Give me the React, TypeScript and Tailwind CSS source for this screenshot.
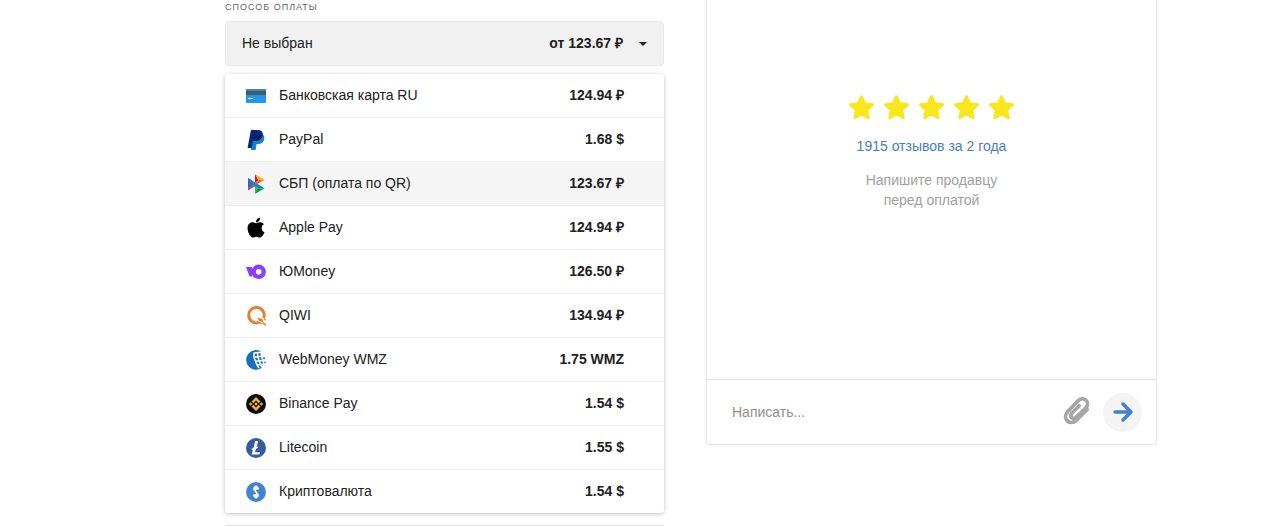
import { useState } from 'react';
import type { ReactNode } from 'react';
import { FaApple } from 'react-icons/fa';

interface PaymentMethod {
  id: string;
  name: string;
  price: string;
  icon: ReactNode;
}

const CardIcon = () => (
  <svg className="w-5 h-5" viewBox="0 0 20 20">
    <rect x="0" y="3" width="20" height="14" rx="1" fill="#2196f3" />
    <path d="M0 5V4a1 1 0 0 1 1-1h18a1 1 0 0 1 1 1v1z" fill="#3d88c4" />
    <rect x="0" y="5" width="20" height="4" fill="#455a64" />
    <rect x="2" y="12" width="5" height="1" fill="#fff" />
  </svg>
);

const PaypalIcon = () => (
  <svg className="w-5 h-5" viewBox="0 0 20 20">
    <path d="M6.500 4h9.200c2.400 1 3 2.800 2.500 5-.7 3.600-3 5-6.200 5h-1.400L9.600 20H5z" fill="#0a86ca" />
    <path d="M4.900 0h7c3.500 0 5.300 1.800 4.700 5-.7 3.800-3.200 5.700-7 5.700H7L5.700 18H1.600z" fill="#00297a" />
    <path d="M8 5h7.800c.6 0 .8.400.7 1-.8 3.200-3.200 4.700-6.900 4.700H7z" fill="#001c64" />
  </svg>
);

const SbpIcon = () => (
  <svg className="w-5 h-5" viewBox="0 0 20 20">
    <path d="M2 4l4 2.500 1 4L2 16.500z" fill="#5b57a2" />
    <path d="M2 16.500l7.500-4.500-3.500-2z" fill="#8b5aa8" />
    <path d="M9 0v8.500l3.500-2z" fill="#d90751" />
    <path d="M9 0l9.500 5.700h-5L12.500 6.500z" fill="#fab718" />
    <path d="M18.500 5.700L11 10.200 9 8.500l4.500-2.800z" fill="#ed6f26" />
    <path d="M9 12v8l3.500-5.500z" fill="#63b22f" />
    <path d="M9 20l9.500-5.700H12z" fill="#0c9a4a" />
    <path d="M2 4l16.500 10.300h-6L9 12.500 4.500 9.500z" fill="#1487c9" />
  </svg>
);

const YooMoneyIcon = () => (
  <svg className="w-5 h-5" viewBox="0 0 20 20">
    <path d="M0 5h6v9.500H3.500z" fill="#8b3ffd" />
    <circle cx="12.700" cy="9.800" r="5" fill="none" stroke="#8b3ffd" strokeWidth="4.400" />
  </svg>
);

const QiwiIcon = () => (
  <svg className="w-5 h-5" viewBox="0 0 20 20">
    <path d="M12.500 16.600A7.700 7.700 0 1 1 17.600 12" fill="none" stroke="#e58231" strokeWidth="3" />
    <path d="M11.500 11.500l4.500 1.200 1.600 2.300-1.600 1-3-1z" fill="#e58231" />
    <path d="M12 16.200l3 1.300M17 17l2.700 2M18.500 13.200l.5.300" stroke="#e58231" strokeWidth="1.600" strokeLinecap="round" />
  </svg>
);

const WebMoneyIcon = () => (
  <svg className="w-5 h-5" viewBox="0 0 20 20">
    <path d="M15 1.500A9.800 9.800 0 1 0 15.500 18l2-5-2-10z" fill="#1472b8" />
    <g fill="none" stroke="#fff" strokeWidth="1.500">
      <path d="M8 3.200l3.500-.6 4-.4M8 7.200l3.800-.5 5-.5M9.500 11.200l3.500-.4 5-.4M11 15l3.500-.4 3.500-.3" />
      <path d="M8 2.500v4.700l1.500 4L11 15l2 3M11.500 2l.3 4.700 1.400 4.100 1.300 3.800 1.500 2.500M15 2l.6 4.300 1.400 4.200 1 4" />
    </g>
    <g fill="#1472b8">
      <circle cx="18" cy="8.300" r="1.100" />
      <circle cx="19" cy="12.300" r=".9" />
    </g>
  </svg>
);

const BinanceIcon = () => (
  <svg className="w-5 h-5" viewBox="0 0 20 20">
    <circle cx="10" cy="10" r="10" fill="#0b0b0e" />
    <g fill="#f0b232">
      <path d="M10 3l4.500 4.500-1.800 1.800L10 6.600 7.300 9.300 5.500 7.500z" />
      <path d="M10 17l4.500-4.500-1.800-1.800-2.700 2.700-2.700-2.700-1.800 1.800z" />
      <path d="M10 8.200l1.800 1.800-1.800 1.800L8.200 10zM4.600 8.200L6.400 10l-1.800 1.800L2.800 10zM15.400 8.200l1.800 1.800-1.800 1.800-1.800-1.800z" />
    </g>
  </svg>
);

const LitecoinIcon = () => (
  <svg className="w-5 h-5" viewBox="0 0 20 20">
    <circle cx="10" cy="10" r="10" fill="#345d9d" />
    <path d="M9.200 3h3l-1.700 6 1.700-.6-.5 1.700-1.700.6-1 3.500h5l-.6 2.300H5.600l1.300-4.700-1.400.5.500-1.700 1.400-.5z" fill="#fff" />
  </svg>
);

const CryptoIcon = () => (
  <svg className="w-5 h-5" viewBox="0 0 20 20">
    <circle cx="10" cy="10" r="10" fill="#4384d1" />
    <path d="M10 3l3.200 3.200L12 8l-1.200-.6L10 8.500l2.500 3.500.7 1.800L10 17l-3.200-3.200L8 12l1.200.6.8-1.100L7.500 8l-.7-1.800z" fill="#fff" />
  </svg>
);

const methods: PaymentMethod[] = [
  { id: 'card', name: 'Банковская карта RU', price: '124.94 ₽', icon: <CardIcon /> },
  { id: 'paypal', name: 'PayPal', price: '1.68 $', icon: <PaypalIcon /> },
  { id: 'sbp', name: 'СБП (оплата по QR)', price: '123.67 ₽', icon: <SbpIcon /> },
  { id: 'apple', name: 'Apple Pay', price: '124.94 ₽', icon: <FaApple className="w-6 h-[23px] shrink-0 text-black" /> },
  { id: 'yoomoney', name: 'ЮMoney', price: '126.50 ₽', icon: <YooMoneyIcon /> },
  { id: 'qiwi', name: 'QIWI', price: '134.94 ₽', icon: <QiwiIcon /> },
  { id: 'webmoney', name: 'WebMoney WMZ', price: '1.75 WMZ', icon: <WebMoneyIcon /> },
  { id: 'binance', name: 'Binance Pay', price: '1.54 $', icon: <BinanceIcon /> },
  { id: 'litecoin', name: 'Litecoin', price: '1.55 $', icon: <LitecoinIcon /> },
  { id: 'crypto', name: 'Криптовалюта', price: '1.54 $', icon: <CryptoIcon /> },
];

function PaymentSelect() {
  const [open, setOpen] = useState(true);
  const [active, setActive] = useState('sbp');
  const [selected, setSelected] = useState<PaymentMethod | null>(null);

  const handleSelect = (method: PaymentMethod) => {
    setSelected(method);
    setOpen(false);
  };

  return (
    <section className="border-b border-[#e0e0e0] pb-3">
      <h2 id="payment-label" className="pt-px text-[9px] leading-3 tracking-[1px] uppercase text-[#666]">
        Способ оплаты
      </h2>
      <button
        type="button"
        aria-haspopup="listbox"
        aria-expanded={open}
        aria-labelledby="payment-label"
        onClick={() => setOpen(!open)}
        className="mt-2 flex h-[45px] w-full items-center rounded border border-[#e8e8e8] bg-[#f1f1f1] px-4 pb-0.5"
      >
        <span>{selected ? selected.name : 'Не выбран'}</span>
        <span className="ml-auto font-bold">{selected ? selected.price : 'от 123.67 ₽'}</span>
        <svg className="mt-0.5 ml-4 w-2 h-1" viewBox="0 0 8 4">
          <path d="M0 0h8L4 4z" fill="#212121" />
        </svg>
      </button>

      {open && (
        <ul
          role="listbox"
          aria-labelledby="payment-label"
          className="mt-2 overflow-hidden rounded-sm bg-white shadow-[0_1px_4px_rgba(0,0,0,0.25)]"
        >
          {methods.map((method) => (
            <li
              key={method.id}
              role="option"
              aria-selected={method.id === active}
              onMouseEnter={() => setActive(method.id)}
              className="border-b border-[#eee] last:border-b-0"
            >
              <button
                type="button"
                onClick={() => handleSelect(method)}
                className={`flex h-[43px] w-full items-center pb-0.5 pl-[21px] pr-10 ${method.id === active ? 'bg-[#f5f5f5]' : 'bg-white'}`}
              >
                <span className="mt-0.5 flex w-5 justify-center">{method.icon}</span>
                <span className="ml-[13px]">{method.name}</span>
                <span className="ml-auto font-bold">{method.price}</span>
              </button>
            </li>
          ))}
        </ul>
      )}
    </section>
  );
}

function Chat() {
  const [message, setMessage] = useState('');

  return (
    <section className="flex flex-col self-start rounded-b border border-t-0 border-[#e5e5e5]">
      <div className="flex flex-col items-center pt-[94px] pb-[169px]">
        <div className="flex gap-2 pr-px" role="img" aria-label="5 из 5">
          {[1, 2, 3, 4, 5].map((star) => (
            <svg key={star} className="w-[27px] h-[27px]" viewBox="0 0 26 26">
              <path
                d="M13 2.200l3.300 7 7.600.9-5.600 5.300 1.400 7.700L13 19.400l-6.700 3.700 1.400-7.700L2.100 10.100l7.600-.9z"
                fill="#f9e71e"
                stroke="#f9e71e"
                strokeWidth="2.400"
                strokeLinejoin="round"
              />
            </svg>
          ))}
        </div>
        <a href="#reviews" className="mt-[15px] leading-5 text-[#4a7ebf]">
          1915 отзывов за 2 года
        </a>
        <p className="mt-[14px] text-center leading-5 text-[#a0a0a0]">
          Напишите продавцу
          <br />
          перед оплатой
        </p>
      </div>

      <form
        onSubmit={(e) => e.preventDefault()}
        className="flex h-[65px] items-center border-t border-[#e5e5e5] pl-[25px] pr-[14px]"
      >
        <input
          type="text"
          aria-label="Сообщение"
          placeholder="Написать..."
          value={message}
          onChange={(e) => setMessage(e.target.value)}
          className="min-w-0 flex-1 outline-none placeholder:text-[#909090]"
        />
        <button type="button" aria-label="Прикрепить файл">
          <svg className="w-7 h-8" viewBox="0 0 28 32" fill="none" stroke="#a6a6a6" strokeWidth="3.700" strokeLinecap="round" strokeLinejoin="round">
            <path d="M24.200 13.500L13.400 24.300c-3 2.800-6.800 2.800-9.200.5-2.400-2.400-2.300-6.300.5-9.100L14.900 4.800c2.600-2.500 6.100-2.500 8.200-.5 2.100 2.100 2 5.400-.4 7.800L13.200 21.200c-1.600 1.500-3.400 1.500-4.600.4-1.200-1.200-1.100-3 .4-4.600l7.300-7.300" />
          </svg>
        </button>
        <button
          type="submit"
          aria-label="Отправить"
          className="ml-3 flex h-[39px] w-[39px] items-center justify-center rounded-full bg-[#f4f4f4]"
        >
          <svg className="w-5 h-5" viewBox="0 0 20 20" fill="none" stroke="#4480cb" strokeWidth="3.400" strokeLinecap="round" strokeLinejoin="round">
            <path d="M2 10h16M10 2l8 8-8 8" />
          </svg>
        </button>
      </form>
    </section>
  );
}

export default function App() {
  return (
    <main className="grid grid-cols-[439fr_451fr] items-start gap-[42px] pl-[225px] pr-[118px] font-['Liberation_Sans',Arial,sans-serif] text-sm text-[#212121]">
      <PaymentSelect />
      <Chat />
    </main>
  );
}
